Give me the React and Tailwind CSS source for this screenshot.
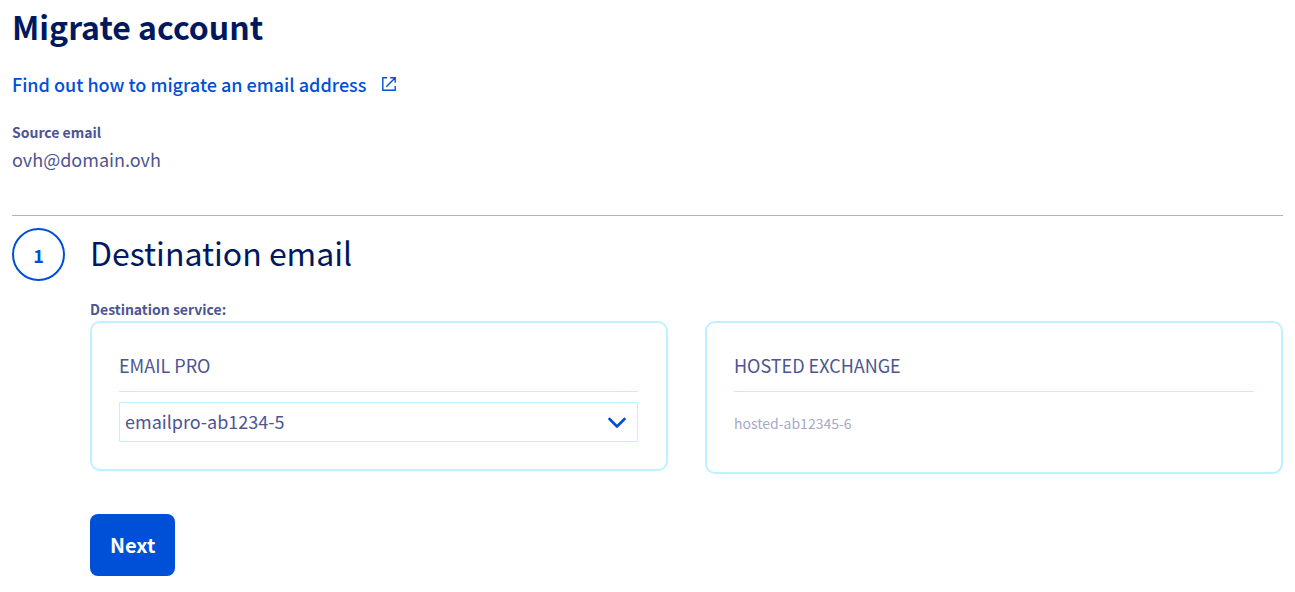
import { useState } from "react";

function ExternalIcon() {
  return (
    <svg viewBox="0 0 14 14" className="h-[14px] w-[14px]" fill="none" stroke="currentColor" strokeWidth="1.4" aria-hidden="true">
      <path d="M5 0.8H0.8V13.2H13.2V9M8.2 0.8H13.2V5.8M13 1L4.3 9.7" />
    </svg>
  );
}

function ChevronIcon() {
  return (
    <svg viewBox="0 0 18 12" className="pointer-events-none col-start-1 row-start-1 mr-3 h-3 w-[18px] self-center justify-self-end text-[#0050d7]" fill="none" stroke="currentColor" strokeWidth="2.6" strokeLinecap="round" strokeLinejoin="round" aria-hidden="true">
      <path d="M1.5 3L9 10.5L16.5 3" />
    </svg>
  );
}

function ServiceCard({ title, children }) {
  return (
    <section className="rounded-[10px] border-2 border-[#bef1ff] pt-7 pr-7 pb-[27px] pl-[27px]">
      <h3 className="border-b border-[#bef1ff] pb-3 text-[18px] leading-7">{title}</h3>
      {children}
    </section>
  );
}

export default function App() {
  const [service, setService] = useState("emailpro-ab1234-5");

  return (
    <main className="bg-white px-3 pb-4 font-['Noto_Sans_CJK_SC',sans-serif] text-[#4d5592]">
      <h1 className="pt-2 text-[32px] leading-9 font-bold text-[#00185e]">Migrate account</h1>
      <a href="#guide" className="mt-7 flex items-center gap-4 text-[18px] leading-6 font-medium text-[#0050d7]">
        Find out how to migrate an email address
        <ExternalIcon />
      </a>

      <dl className="mt-6">
        <dt className="text-[14px] leading-6 font-bold">Source email</dt>
        <dd className="text-[18px] leading-[30px]">ovh@domain.ovh</dd>
      </dl>

      <hr className="mt-[41px] border-[#b3b3b3]" />

      <form className="mt-3" onSubmit={(event) => event.preventDefault()}>
        <div className="flex items-center gap-[25px]">
          <span className="flex h-[53px] w-[53px] items-center justify-center rounded-full border-2 border-[#0050d7] text-[18px] leading-6 font-bold text-[#0050d7]">
            1
          </span>
          <h2 className="pb-[6px] text-[32px] leading-10 text-[#00185e]">Destination email</h2>
        </div>

        <div className="pl-[78px]">
          <label htmlFor="destination" className="mt-[18px] block text-[14px] leading-5 font-bold">
            Destination service:
          </label>
          <div className="mt-[2px] grid grid-cols-2 items-start gap-[37px]">
            <ServiceCard title="EMAIL PRO">
              <div className="mt-[10px] grid">
                <select
                  id="destination"
                  value={service}
                  onChange={(event) => setService(event.target.value)}
                  className="col-start-1 row-start-1 h-10 w-full appearance-none rounded-[1px] border border-[#bef1ff] bg-white pr-10 pb-[2px] pl-[5px] text-[18px]"
                >
                  <option>emailpro-ab1234-5</option>
                </select>
                <ChevronIcon />
              </div>
            </ServiceCard>
            <ServiceCard title="HOSTED EXCHANGE">
              <p className="pt-[21px] pb-3 text-[14px] leading-5 text-[#a6aac8]">hosted-ab12345-6</p>
            </ServiceCard>
          </div>
          <button type="submit" className="mt-10 h-[62px] rounded-lg bg-[#0050d7] px-5 text-[20px] leading-6 font-bold text-white">
            Next
          </button>
        </div>
      </form>
    </main>
  );
}
